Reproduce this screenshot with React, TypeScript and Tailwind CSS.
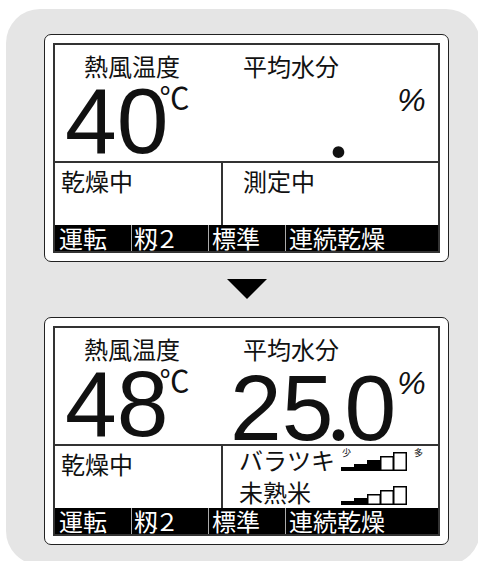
import type { ReactNode } from "react";

function Bars({ filled, scale }: { filled: number; scale?: boolean }) {
  const heights = [4, 7, 11, 15, 19];
  return (
    <div className="relative w-[66px] h-[20px]">
      <svg width="66" height="20" viewBox="0 0 66 20" className="block">
        {heights.map((h, i) =>
          i < filled ? (
            <rect key={i} x={i * 13} y={20 - h} width={13.5} height={h} fill="#000" />
          ) : (
            <rect
              key={i}
              x={i * 13 + 0.75}
              y={20 - h + 0.75}
              width={12.5}
              height={h - 1.5}
              fill="#fff"
              stroke="#000"
              strokeWidth={1.5}
            />
          )
        )}
      </svg>
      {scale && (
        <>
          <span className="absolute left-[1px] -top-[3px] text-[9px] leading-none">少</span>
          <span className="absolute left-[73px] -top-[3px] text-[9px] leading-none">多</span>
        </>
      )}
    </div>
  );
}

function Display({ temp, moist, children }: { temp: string; moist: boolean; children: ReactNode }) {
  return (
    <div className="w-[405px] h-[228px] rounded-[7px] border-[1.5px] border-[#222] bg-white p-[8px]">
      <div className="h-full border-2 border-[#333] flex flex-col">
        {/* upper readings */}
        <div className="h-[118px] flex border-b-2 border-[#333]">
          <div className="w-[168px] pt-[9px]">
            <div className="pl-[29px] text-[24px] leading-6">熱風温度</div>
            <div className="flex items-start pl-[10px] -mt-[3px]">
              <span className="[font-family:'Liberation_Sans',sans-serif] text-[93px] leading-none">{temp}</span>
              <span className="text-[30px] leading-none -ml-[9px] mt-[6px]">℃</span>
            </div>
          </div>
          <div className="flex-1 pt-[9px]">
            <div className="pl-[20px] text-[24px] leading-6">平均水分</div>
            <div className="flex items-start pl-[7px] -mt-[3px]">
              <span className="[font-family:'Liberation_Sans',sans-serif] text-[93px] leading-none">
                <span className={moist ? "" : "invisible"}>25</span>
                <span className="-ml-[6px] -mr-[5px] [font-family:Lato,sans-serif]">.</span>
                <span className={moist ? "" : "invisible"}>0</span>
              </span>
              <span className="[font-family:'Liberation_Sans',sans-serif] italic text-[32px] leading-none mt-[9px] ml-[1px]">%</span>
            </div>
          </div>
        </div>

        {/* status cells */}
        <div className="h-[62px] flex text-[24px]">
          <div className="w-[168px] border-r-2 border-[#333] pl-[6px] pt-[6px] leading-6">乾燥中</div>
          <div className="flex-1 pl-[16px]">{children}</div>
        </div>

        {/* black status bar */}
        <div className="flex-1 bg-black text-white text-[24px] leading-[25px] flex">
          <div className="w-[76px] pl-[4px]">運転</div>
          <div className="w-[77px] border-l border-[#aaa] pl-[2px]">
            籾<span className="-ml-[3px]">２</span>
          </div>
          <div className="w-[77px] border-l border-[#aaa] pl-[3px]">標準</div>
          <div className="flex-1 border-l border-[#aaa] pl-[3px]">連続乾燥</div>
        </div>
      </div>
    </div>
  );
}

export default function App() {
  return (
    <div className="w-[478px] h-[561px] bg-white overflow-hidden text-[#111] [font-family:'Noto_Sans_CJK_JP',sans-serif]">
      <div className="ml-[6px] mt-[9px] w-[474px] h-[556px] rounded-[34px] bg-[#e5e5e5] pl-[38px] pt-[25px]">
        <Display temp="40" moist={false}>
          <div className="pt-[6px] pl-[4px] leading-6">測定中</div>
        </Display>

        <div className="w-[405px] flex justify-center mt-[17px] mb-[18px]">
          <svg width="40" height="20" viewBox="0 0 40 20">
            <polygon points="0,0 40,0 20,20" fill="#000" />
          </svg>
        </div>

        <Display temp="48" moist={true}>
          <div className="leading-[32px] -mt-[2px]">
            <div className="flex items-end">
              <span className="w-[102px]">バラツキ</span>
              <div className="mb-[5px]">
                <Bars filled={3} scale />
              </div>
            </div>
            <div className="flex items-end">
              <span className="w-[102px]">未熟米</span>
              <div className="mb-[3px]">
                <Bars filled={2} />
              </div>
            </div>
          </div>
        </Display>
      </div>
    </div>
  );
}
